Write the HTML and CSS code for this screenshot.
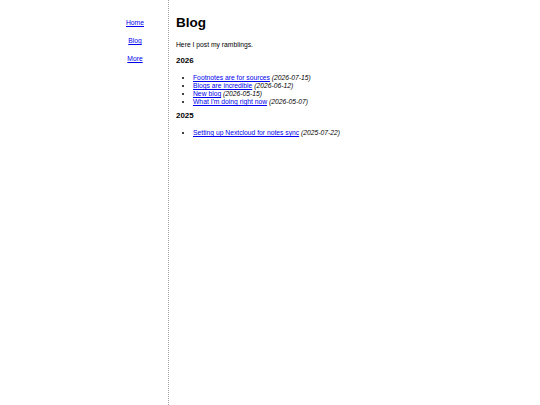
FILE: index.html
```html
<!DOCTYPE html>
<html lang="en">
<head>
<meta charset="utf-8">
<title>Blog</title>
<link rel="stylesheet" href="styles.css">
</head>
<body>
<div class="layout">
  <nav class="sidebar">
    <a href="#">Home</a>
    <a href="#">Blog</a>
    <a href="#">More</a>
  </nav>
  <main class="content">
    <h1 class="title">Blog</h1>
    <p class="intro">Here I post my ramblings.</p>
    <h3 class="year">2026</h3>
    <ul class="posts">
      <li><a href="#">Footnotes are for sources</a> <em>(2026-07-15)</em></li>
      <li><a href="#">Blogs are incredible</a> <em>(2026-06-12)</em></li>
      <li><a href="#">New blog</a> <em>(2026-05-15)</em></li>
      <li><a href="#">What I'm doing right now</a> <em>(2026-05-07)</em></li>
    </ul>
    <h3 class="year">2025</h3>
    <ul class="posts">
      <li><a href="#">Setting up Nextcloud for notes sync</a> <em>(2025-07-22)</em></li>
    </ul>
  </main>
</div>
</body>
</html>
```

FILE: styles.css
```css
html, body {
  margin: 0;
  padding: 0;
  background: #fff;
}
body {
  font-family: "Liberation Sans", Arial, sans-serif;
  font-size: 6.75px;
  line-height: 8px;
  color: #000;
}
a {
  color: #0000ee;
}
.layout {
  display: flex;
  margin-left: 102px;
  min-height: 100vh;
}
.sidebar {
  width: 66px;
  border-right: 1px dotted #a0a0a0;
  display: flex;
  flex-direction: column;
  align-items: center;
  gap: 10px;
  padding-top: 19px;
}
.content {
  padding-left: 7px;
  display: flow-root;
}
.title {
  font-size: 13.5px;
  line-height: 16px;
  font-weight: bold;
  margin: 14.5px 0 10px;
}
.intro {
  margin: 0 0 7.5px;
}
.year {
  font-size: 7.9px;
  line-height: 9px;
  font-weight: bold;
  margin: 5px 0 9px;
}
.posts {
  margin: 0;
  padding-left: 17px;
}
.posts em {
  font-style: italic;
}
```
